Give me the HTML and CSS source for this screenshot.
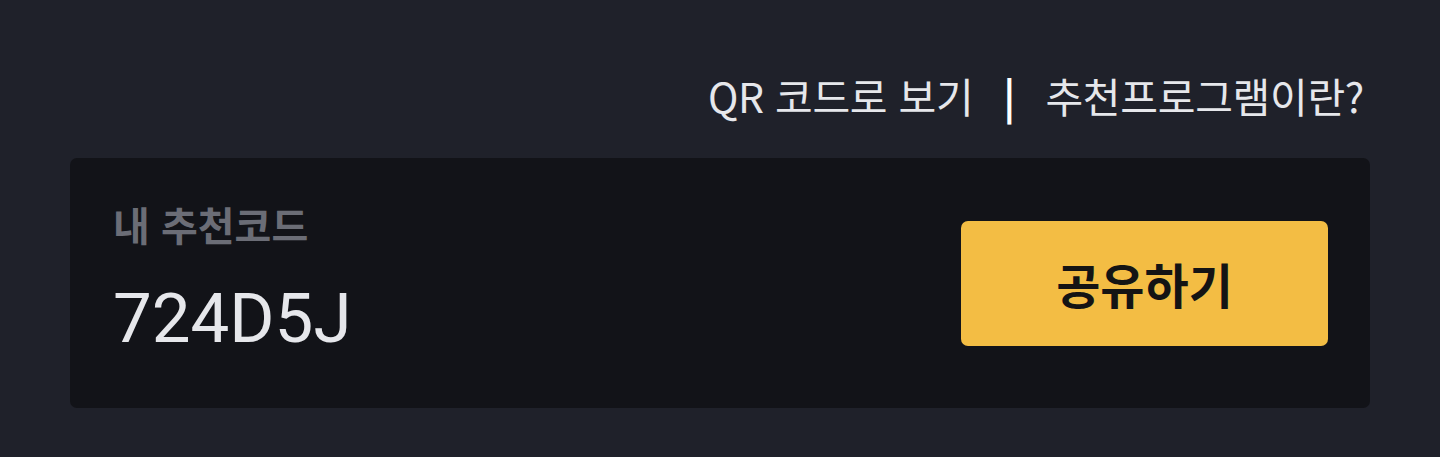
FILE: index.html
```html
<!DOCTYPE html>
<html lang="ko">
<head>
<meta charset="utf-8">
<link rel="stylesheet" href="styles.css">
</head>
<body>
<div class="page">
  <div class="links">
    <a class="link">QR 코드로 보기</a>
    <span class="sep">|</span>
    <a class="link">추천프로그램이란?</a>
  </div>
  <div class="card">
    <div class="info">
      <div class="label">내 추천코드</div>
      <div class="code">724D5J</div>
    </div>
    <button class="share">공유하기</button>
  </div>
</div>
</body>
</html>
```
FILE: styles.css
```css
html, body {
  margin: 0;
  padding: 0;
  background: #1f212a;
}
body {
  font-family: "Noto Sans CJK KR", "Noto Sans", sans-serif;
  color: #e6e7eb;
}
.page {
  padding: 66px 70px 0 70px;
}
.links {
  display: flex;
  justify-content: flex-end;
  align-items: center;
  gap: 30px;
  padding-right: 6px;
  font-size: 41px;
  font-weight: 400;
  line-height: 58px;
  color: #e6e7eb;
}
.link {
  letter-spacing: -0.3px;
}
.sep {
  font-weight: 700;
  color: #ffffff;
}
.card {
  margin-top: 34px;
  height: 250px;
  box-sizing: border-box;
  background: #121318;
  border-radius: 7px;
  display: flex;
  align-items: center;
  justify-content: space-between;
  padding: 0 42px 0 43px;
}
.info {
  display: flex;
  flex-direction: column;
  padding-bottom: 8px;
}
.label {
  font-size: 40px;
  font-weight: 700;
  color: #6b6d76;
  line-height: 50px;
}
.code {
  font-family: Roboto, "Noto Sans", sans-serif;
  font-size: 69px;
  color: #e6e7eb;
  line-height: 80px;
  margin-top: 30px;
}
.share {
  width: 367px;
  height: 125px;
  border: none;
  border-radius: 7px;
  background: #f3bd44;
  color: #141414;
  font-family: "Noto Sans CJK KR", sans-serif;
  font-size: 48px;
  font-weight: 700;
}
```
